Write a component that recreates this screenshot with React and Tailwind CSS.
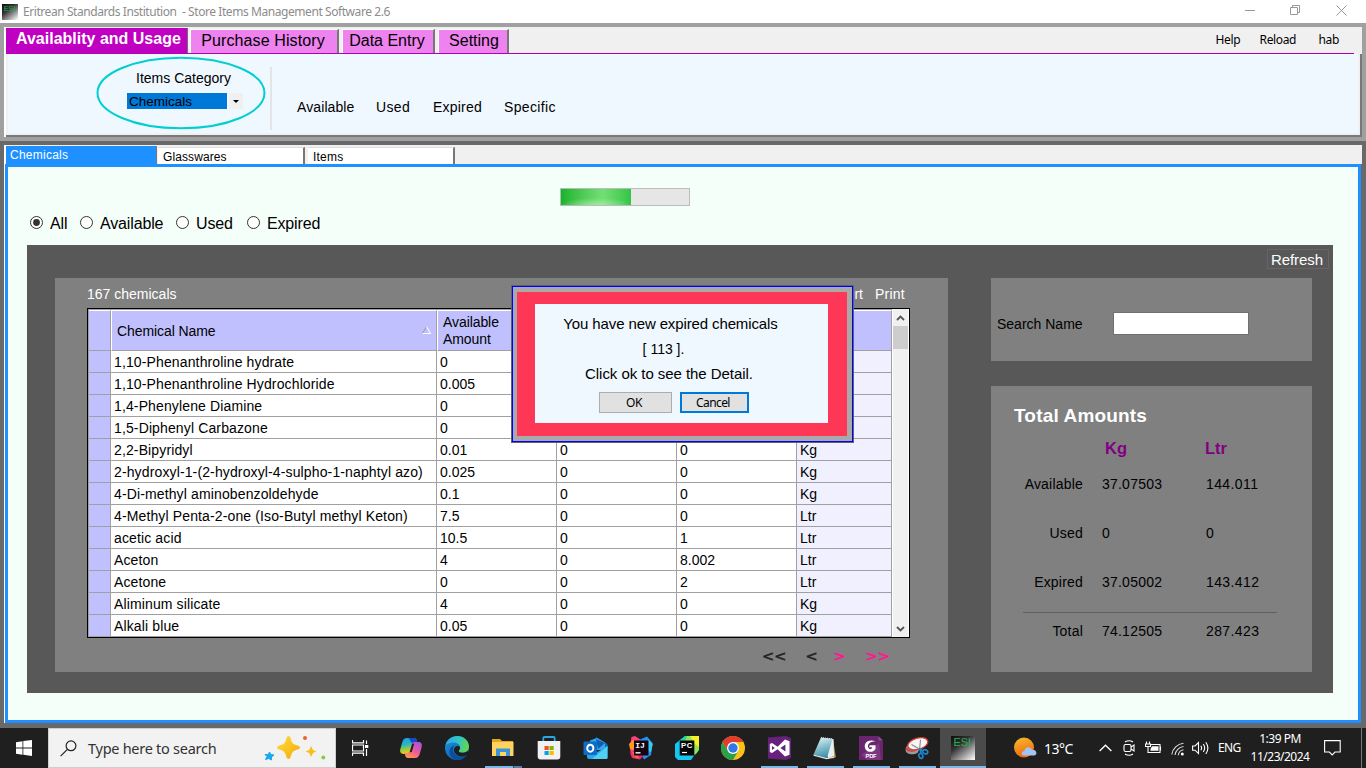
import React from "react";

const sans = "font-['Liberation_Sans',Arial,sans-serif]";
const ui = "font-['Noto_Sans','Open_Sans',sans-serif]";

function EsiIcon({ size, id }) {
  return (
    <svg width={size} height={size} viewBox="0 0 24 24" className="block shrink-0">
      <defs>
        <linearGradient id={id} x1="0.1" y1="0" x2="0.9" y2="1">
          <stop offset="0" stopColor="#111" />
          <stop offset="0.35" stopColor="#333" />
          <stop offset="1" stopColor="#f4f4f4" />
        </linearGradient>
      </defs>
      <rect width="24" height="24" fill={`url(#${id})`} />
      <text x="2.5" y="9.8" fontSize="11" textLength="17.5" fill="#22b04c" fontFamily="Liberation Sans, sans-serif">ESI</text>
    </svg>
  );
}

function TitleBar() {
  return (
    <div className={`flex h-[23px] items-center bg-white text-[#8c8c8c] ${ui}`}>
      <div className="ml-[2px]"><EsiIcon size={16} id="esiSmall" /></div>
      <span className="ml-[5px] text-[12px] leading-[22px] whitespace-pre tracking-[-0.43px]">
        Eritrean Standards Institution  - Store Items Management Software 2.6
      </span>
      <div className="mr-[19px] mb-[3px] ml-auto flex items-center gap-[35px]">
        <svg width="10" height="10"><path d="M0 5.5H10" stroke="#999" /></svg>
        <svg width="11" height="10" className="block" fill="none" stroke="#999">
          <path d="M0.5 2.5H7.5V9.5H0.5ZM2.5 2.5V0.5H9.5V7.5H7.5" />
        </svg>
        <svg width="11" height="11" className="block" stroke="#999"><path d="M0.5 0.5L10.5 10.5M10.5 0.5L0.5 10.5" /></svg>
      </div>
    </div>
  );
}

function RibbonTab({ label, className }) {
  return (
    <div className={`mt-[2px] mr-[2px] h-[24px] border-t border-r-2 border-l border-t-white border-r-[#777] border-l-white bg-[#ee82ee] text-center text-[16px] leading-[21px] text-black ${className}`}>
      {label}
    </div>
  );
}

function Ribbon() {
  return (
    <div className="h-[118px] bg-[#a0a0a0] p-[4px]">
      <div className="flex h-[110px] flex-col border-l-2 border-white bg-[#f0f0f0]">
        <div className="flex h-[26px] shrink-0">
          <div className="mt-px h-[26px] w-[182px] shrink-0 border-r border-[#707070] bg-[#c000c0] pl-[10px] text-[16px] leading-[22px] font-bold whitespace-nowrap text-white">
            Availablity and Usage
          </div>
          <RibbonTab label="Purchase History" className="ml-[2px] w-[149px] pr-[2px] tracking-[0.12px]" />
          <RibbonTab label="Data Entry" className="ml-[1px] w-[93px] pr-[2px]" />
          <RibbonTab label="Setting" className="ml-[1px] w-[71px] pl-[2px]" />
          <div className={`mr-[23px] ml-auto flex pt-[2px] text-[12px] leading-[22px] text-black ${ui} tracking-[-0.35px]`}>
            <span className="w-[44px]">Help</span>
            <span className="w-[59px]">Reload</span>
            <span>hab</span>
          </div>
        </div>
        <div className="mr-[8px] ml-px h-px shrink-0 bg-[#b000b0]" />
        <div className="flex h-[83px] border-r-2 border-b-2 border-[#787878] bg-[#f0f0f0] pr-[2px] pb-[2px] pl-[2px]">
          <div className="flex grow bg-[#f0f8ff]">
            <div className="relative ml-[88px] h-[75px] w-[172px]">
              <svg width="172" height="76" className="absolute inset-0" fill="none">
                <ellipse cx="85" cy="39" rx="83.5" ry="35.3" stroke="#00ced1" strokeWidth="2" />
              </svg>
              <div className="relative pt-[16px] pl-[3px] text-center text-[14px] leading-[16px]">Items Category</div>
              <div className="relative mt-[7px] ml-[31px] flex h-[16px]">
                <div className="w-[100px] bg-[#0078d7] pl-[2px] text-[13.5px] leading-[18px]">Chemicals</div>
                <div className="ml-[2px] flex w-[14px] items-center justify-center bg-[#f0f0f0]">
                  <svg width="6" height="3"><path d="M0 0H6L3 3Z" fill="#000" /></svg>
                </div>
              </div>
            </div>
            <div className="mt-[13px] ml-[2px] h-[63px] w-[2px] bg-[#e2e4e8]" />
            <div className="ml-[25px] flex pt-[44px] text-[14px] leading-[18px]">
              <span className="w-[79px] tracking-[0.1px]">Available</span>
              <span className="w-[57px] tracking-[0.35px]">Used</span>
              <span className="w-[71px] tracking-[0.2px]">Expired</span>
              <span className="tracking-[0.35px]">Specific</span>
            </div>
          </div>
        </div>
      </div>
    </div>
  );
}

function Radio({ label, checked, className }) {
  return (
    <div className={`flex items-center ${className}`}>
      <svg width="14" height="14" className="block">
        <circle cx="6.5" cy="6.5" r="6" fill="#fff" stroke="#333" />
        {checked && <circle cx="6.5" cy="6.5" r="3.4" fill="#333" />}
      </svg>
      <span className="ml-[6px] pt-[2px] text-[16px] leading-[18px] tracking-[-0.15px]">{label}</span>
    </div>
  );
}

const rows = [
  ["1,10-Phenanthroline hydrate", "0", "0", "0", "Kg"],
  ["1,10-Phenanthroline Hydrochloride", "0.005", "0", "0", "Kg"],
  ["1,4-Phenylene Diamine", "0", "0", "0", "Kg"],
  ["1,5-Diphenyl Carbazone", "0", "0", "0", "Kg"],
  ["2,2-Bipyridyl", "0.01", "0", "0", "Kg"],
  ["2-hydroxyl-1-(2-hydroxyl-4-sulpho-1-naphtyl azo)", "0.025", "0", "0", "Kg"],
  ["4-Di-methyl aminobenzoldehyde", "0.1", "0", "0", "Kg"],
  ["4-Methyl Penta-2-one (Iso-Butyl methyl Keton)", "7.5", "0", "0", "Ltr"],
  ["acetic acid", "10.5", "0", "1", "Ltr"],
  ["Aceton", "4", "0", "8.002", "Ltr"],
  ["Acetone", "0", "0", "2", "Ltr"],
  ["Aliminum silicate", "4", "0", "0", "Kg"],
  ["Alkali blue", "0.05", "0", "0", "Kg"],
];

const cols = "grid grid-cols-[22px_326px_120px_120px_120px_95px]";
const cell = "border-r border-b border-[#a0a0a0]";
const headCell = "border-r border-b border-t border-l border-r-[#a0a0a0] border-b-[#a0a0a0] border-t-white border-l-white bg-[#c0c0ff]";

function ChemicalTable() {
  return (
    <div className="flex h-[330px] w-[823px] border border-black bg-white">
      <div className="w-[804px] border-t border-l border-[#a0a0a0]">
        <div className={`${cols} text-[14px] leading-[17px] tracking-[-0.08px]`}>
          <div className="h-[41px] border-t border-r border-b border-t-white border-r-[#a0a0a0] border-b-[#a0a0a0] bg-[#c0c0ff]" />
          <div className={`${headCell} flex items-center justify-between pt-[2px] pr-[5px] pl-[5px]`}>
            Chemical Name
            <svg width="9" height="8" className="mb-[4px]"><path d="M4.5 0.5L0.5 7.5" stroke="#999" /><path d="M4.5 0.5L8.5 7.5H0.5" fill="none" stroke="#fff" /></svg>
          </div>
          <div className={`${headCell} pt-[3px] pr-[40px] pl-[5px]`}>Available Amount</div>
          <div className={headCell} />
          <div className={headCell} />
          <div className={headCell} />
        </div>
        {rows.map((r) => (
          <div key={r[0]} className={`${cols} h-[22px] grid-rows-[22px] text-[14px] leading-[22px] whitespace-nowrap`}>
            <div className={`${cell} bg-[#c0c0ff]`} />
            <div className={`${cell} h-[22px] pl-[3px] tracking-[0.13px]`}>{r[0]}</div>
            <div className={`${cell} h-[22px] pl-[3px]`}>{r[1]}</div>
            <div className={`${cell} h-[22px] pl-[3px]`}>{r[2]}</div>
            <div className={`${cell} h-[22px] pl-[3px]`}>{r[3]}</div>
            <div className={`${cell} h-[22px] bg-[#f0f0ff] pl-[3px]`}>{r[4]}</div>
          </div>
        ))}
      </div>
      <div className="ml-[1px] flex w-[15px] flex-col items-center bg-[#f0f0f0]">
        <svg width="9" height="6" className="mt-[6px] block"><path d="M1 5L4.5 1.5L8 5" fill="none" stroke="#555" strokeWidth="1.8" /></svg>
        <div className="mt-[5px] h-[23px] w-[15px] bg-[#cdcdcd]" />
        <svg width="9" height="6" className="mt-auto mb-[5px] block"><path d="M1 1L4.5 4.5L8 1" fill="none" stroke="#555" strokeWidth="1.8" /></svg>
      </div>
    </div>
  );
}

function Amounts({ label, kg, ltr, className }) {
  return (
    <div className={`grid grid-cols-[92px_104px_1fr] text-[14px] ${className}`}>
      <span className="text-right tracking-[0.2px]">{label}</span>
      <span className="pl-[19px] tracking-[0.22px]">{kg}</span>
      <span className="pl-[19px] tracking-[0.4px]">{ltr}</span>
    </div>
  );
}

function Dialog() {
  return (
    <div className="absolute top-[285px] left-[511px] h-[158px] w-[343px] border border-[#606070] text-black">
      <div className="h-full border border-[#0000ff] bg-[#a9a9a9] p-[4px] pt-[5px] pr-[5px] pb-[5px]">
        <div className="h-full bg-[#ff3757] pt-[12px] pr-[19px] pb-[13px] pl-[18px]">
          <div className="h-full bg-[#f0f8ff] pt-[7px]">
            <div className="w-[271px] text-center text-[15px] leading-[25px]">
              <div className="tracking-[-0.12px]">You have new expired chemicals</div>
              <div className="pt-px pr-[14px] text-[14px] leading-[24px]">[ 113 ].</div>
              <div className="pr-[3px] tracking-[-0.05px]">Click ok to see the Detail.</div>
            </div>
            <div className={`mt-[6px] ml-[64px] flex gap-[8px] text-[12px] ${ui}`}>
              <div className="h-[21px] w-[73px] border border-[#adadad] bg-[#e1e1e1] pr-[3px] text-center leading-[20px] tracking-[-0.5px]">OK</div>
              <div className="h-[21px] w-[69px] border-2 border-[#0078d7] bg-[#e1e1e1] pr-[3px] text-center leading-[18px] tracking-[-0.6px]">Cancel</div>
            </div>
          </div>
        </div>
      </div>
    </div>
  );
}

function ChemicalsPage() {
  return (
    <div className="flex h-[587px] flex-col bg-[#696969] pt-[4px] pr-[4px] pb-[5px] pl-[4px]">
      <div className="flex h-[19px] border-l-2 border-white bg-[#f0f0f0] text-[12px]">
        <div className="mt-px w-[151px] border-r border-[#777] bg-[#1e90ff] pl-[4px] leading-[18px] tracking-[0.25px] text-white">Chemicals</div>
        <div className="mt-[2px] ml-[1px] w-[147px] border-t border-r-2 border-t-[#ddd] border-r-[#777] bg-white pl-[5px] leading-[18px] tracking-[0.1px]">Glasswares</div>
        <div className="mt-[2px] ml-[3px] w-[147px] border-t border-r-2 border-t-[#ddd] border-r-[#777] bg-white pl-[5px] leading-[18px] tracking-[0.2px]">Items</div>
      </div>
      <div className="grow border-l border-white">
        <div className="mr-px h-full border-[3px] border-[#1e90ff] bg-[#f5fffa]">
          <div className="mt-[21px] ml-[552px] h-[18px] w-[130px] border border-[#bcbcbc] bg-[#e6e6e6]">
            <div className="h-[16px] w-[70px] bg-linear-to-r from-[#11b42c] via-[#72df75] via-60% to-[#2fc545]">
              <div className="h-full bg-radial-[50%_45%_at_50%_100%] from-[#a8f0a8]/80 to-transparent" />
            </div>
          </div>
          <div className="mt-[7px] ml-[22px] flex h-[20px] text-black">
            <Radio label="All" checked className="w-[50px]" />
            <Radio label="Available" className="w-[96px]" />
            <Radio label="Used" className="w-[71px]" />
            <Radio label="Expired" />
          </div>
          <div className="mt-[12px] ml-[19px] flex h-[448px] w-[1306px] bg-[#585858] pl-[28px]">
            <div className="mt-[33px] h-[394px] w-[893px] bg-[#808080] pl-[32px]">
              <div className="flex h-[30px] w-[818px] items-center pt-[3px] text-[14px] text-white">
                <span className="grow">167 chemicals</span>
                <span className="mr-[12px]">Export</span>
                <span className="tracking-[0.25px]">Print</span>
              </div>
              <ChemicalTable />
              <div className="ml-[675px] flex h-[36px] items-center font-['DejaVu_Sans',sans-serif] text-[14.5px] leading-[20px] text-[#222] [-webkit-text-stroke:0.5px]">
                <span className="w-[43.5px]">&lt;&lt;</span>
                <span className="w-[28px]">&lt;</span>
                <span className="w-[32px] text-[#ff1493]">&gt;</span>
                <span className="text-[#ff1493]">&gt;&gt;</span>
              </div>
            </div>
            <div className="ml-[43px] w-[342px]">
              <div className="flex h-[33px] justify-end pt-[4px]">
                <div className="mr-[4px] h-[20px] w-[62px] border border-[#656565] pr-[2px] text-center text-[15px] leading-[20px] tracking-[-0.05px] text-white">Refresh</div>
              </div>
              <div className="flex h-[83px] w-[321px] items-center bg-[#808080] pt-[8px] pl-[6px] text-[14px]">
                <span className="w-[116px] pt-[2px]">Search Name</span>
                <div className="h-[23px] w-[136px] border border-[#707070] bg-white" />
              </div>
              <div className="mt-[25px] h-[286px] w-[321px] bg-[#808080] pt-[17px]">
                <div className="pl-[23px] text-[19px] leading-[25px] font-bold tracking-[0.17px] text-white">Total Amounts</div>
                <div className="mt-[9px] grid h-[23px] grid-cols-[100px_1fr] pl-[114px] text-[16.5px] leading-[23px] font-bold text-[#800080]">
                  <span>Kg</span>
                  <span>Ltr</span>
                </div>
                <Amounts label="Available" kg="37.07503" ltr="144.011" className="leading-[49px]" />
                <Amounts label="Used" kg="0" ltr="0" className="leading-[49px]" />
                <Amounts label="Expired" kg="37.05002" ltr="143.412" className="h-[54px] leading-[49px]" />
                <div className="ml-[32px] h-px w-[254px] bg-[#606060]" />
                <Amounts label="Total" kg="74.12505" ltr="287.423" className="leading-[36px]" />
              </div>
            </div>
          </div>
        </div>
      </div>
    </div>
  );
}

function Slot({ children, bar }) {
  return (
    <div className={`relative flex h-[40px] w-[46px] shrink-0 items-center justify-center ${bar === "active" ? "bg-[#4b4b4b]" : ""}`}>
      {children}
      {bar === "on" && <div className="absolute bottom-0 left-[5px] h-[2px] w-[37px] bg-[#76b9ed]" />}
      {bar === "multi" && (
        <div className="absolute bottom-0 left-[5px] flex h-[2px] w-[37px] bg-[#76b9ed]">
          <div className="ml-auto w-[9px] border-l border-[#33506a] bg-[#557fa4]" />
        </div>
      )}
      {bar === "active" && <div className="absolute bottom-0 left-0 h-[2px] w-[46px] bg-[#76b9ed]" />}
    </div>
  );
}

const Copilot = () => (
  <svg width="24" height="24" viewBox="0 0 24 24">
    <defs>
      <linearGradient id="cpA" x1="0" y1="0" x2="0.2" y2="1">
        <stop offset="0" stopColor="#1b9de8" /><stop offset="0.45" stopColor="#2cb5c0" /><stop offset="0.75" stopColor="#9bcf3c" /><stop offset="1" stopColor="#f6c614" />
      </linearGradient>
      <linearGradient id="cpB" x1="0.8" y1="0" x2="0.2" y2="1">
        <stop offset="0" stopColor="#a452e8" /><stop offset="0.5" stopColor="#ee5a96" /><stop offset="1" stopColor="#ff9a4c" />
      </linearGradient>
    </defs>
    <path d="M11 2H15.2C17 2 17.4 3.4 17.9 5L18.5 7H16C14 7 13.2 8 12.7 10L11.2 15.5C10.6 17.5 9.8 18 8 18H4.5C1.6 18 .6 15.8 1.4 12.8L3 7C4 3.6 5 2 8 2Z" fill="url(#cpA)" />
    <path d="M11 2H15.2C17 2 17.4 3.4 17.9 5L18.5 7H14C12.3 7 11.6 5.8 11 4C10.6 2.8 10 2 8.5 2Z" fill="#1748c8" />
    <path d="M13 22H8.8C7 22 6.6 20.6 6.1 19L5.5 17H8C10 17 10.8 16 11.3 14L12.8 8.5C13.4 6.5 14.2 6 16 6H19.5C22.4 6 23.4 8.2 22.6 11.2L21 17C20 20.4 19 22 16 22Z" fill="url(#cpB)" />
    <path d="M10.6 16.2L13.2 7.8L15.2 7.4L12.8 16Z" fill="#1f1f1f" />
  </svg>
);

const Edge = () => (
  <svg width="24" height="24" viewBox="0 0 24 24">
    <defs>
      <linearGradient id="edA" x1="0" y1="0.2" x2="1" y2="0.5"><stop offset="0" stopColor="#2aa9e8" /><stop offset="0.5" stopColor="#31c4c6" /><stop offset="1" stopColor="#63d64c" /></linearGradient>
      <linearGradient id="edB" x1="0" y1="0" x2="0.5" y2="1"><stop offset="0" stopColor="#1f96d8" /><stop offset="1" stopColor="#0d62b8" /></linearGradient>
    </defs>
    <circle cx="12" cy="12" r="12" fill="url(#edB)" />
    <path d="M0.5 9.5C2 3.5 7 0 12.3 0C19 0 24 5 24 10.4C24 14 21.2 16.6 17.6 16.6C15.2 16.6 13.7 15.7 13.7 15C13.7 14.3 15.2 13.8 15.2 11.6C15.2 8.6 12 6.6 8.4 6.6C5 6.6 2 8 0.5 9.5Z" fill="url(#edA)" />
    <path d="M9.6 9.5C7.6 11 7.6 15.5 10 18.3C12.5 21.2 17 22 21.5 19.3C19.3 22.3 15.8 24 12 24C6 22.5 3.8 18.5 4.5 14.5C5 11.5 7.2 9.8 9.6 9.5Z" fill="#0b4f9c" />
    <path d="M13.7 15C13.7 16.6 18 17.8 22 15.6C23.4 14.8 24.6 16 23.4 17.4C22.8 18.4 22.2 18.9 21.5 19.2C17.5 21.5 12 20.6 9.6 16.5C8.4 14 9 11.2 11.5 10.3C15 9.2 15.2 11.8 14.9 12.8C14.7 13.8 13.7 14.2 13.7 15Z" fill="#1f1f1f" />
  </svg>
);

const Explorer = () => (
  <svg width="22" height="20" viewBox="0 0 22 20">
    <path d="M0 1H8L10 3H21V18H0Z" fill="#e5a61a" />
    <path d="M0 4H21.5V18H0Z" fill="#ffd35e" />
    <path d="M4 18V10.5H18V18H14V14H8V18Z" fill="#3b93d9" />
  </svg>
);

const Store = () => (
  <svg width="24" height="24" viewBox="0 0 24 24">
    <path d="M6.3 6V2.2C6.3 1.5 6.8 1 7.5 1H16.5C17.2 1 17.7 1.5 17.7 2.2V6" fill="none" stroke="#2aa7e4" strokeWidth="1.8" />
    <path d="M0.7 5H23.3V20.5Q23.3 23.5 20.3 23.5H3.7Q0.7 23.5 0.7 20.5Z" fill="#f1f1f1" />
    <path d="M7.5 10H11.7V14H7.5Z" fill="#f25022" /><path d="M12.5 10H16.7V14H12.5Z" fill="#7fba00" />
    <path d="M7.5 15H11.7V19H7.5Z" fill="#00a4ef" /><path d="M12.5 15H16.7V19H12.5Z" fill="#ffb900" />
  </svg>
);

const Outlook = () => (
  <svg width="25" height="24" viewBox="0 0 25 24">
    <path d="M4.5 8L13.5 1.3L24.5 8V12H4.5Z" fill="#1066b8" />
    <path d="M7 4.5L14 2L22 6.5V14H7Z" fill="#33a7e8" />
    <path d="M13 3L22 7L15 13Z" fill="#0f5fb0" />
    <path d="M4 12L14.5 16L24.5 10V21.5Q24.5 23 23 23H6Q4 23 4 21Z" fill="#28a8ea" />
    <path d="M24.5 10L9 23H23Q24.5 23 24.5 21.5Z" fill="#50d0f5" />
    <rect x="0.5" y="5.5" width="13.5" height="13.5" rx="1" fill="#0f6cc4" />
    <ellipse cx="7.3" cy="12.2" rx="3.1" ry="3.5" fill="none" stroke="#fff" strokeWidth="1.9" />
  </svg>
);

const Idea = () => (
  <svg width="24" height="24" viewBox="0 0 24 24">
    <path d="M1 10L2.5 1L6 0L12 4L7 16L1.5 17Z" fill="#ff3f7c" />
    <path d="M0 8L4 4L8 8L4 14L1 13Z" fill="#ff9a1e" />
    <path d="M10 4L18 0.5L23.5 7L22 19L15 23.5L12 18Z" fill="#2a8ff2" />
    <path d="M19 3L23.8 8L22 16L19 15Z" fill="#38c8f0" />
    <path d="M1 17L8 13L15 19L11 23.5L3 22Z" fill="#f0267a" />
    <path d="M3 16L8 17L10 23L5 21Z" fill="#fc6b3a" />
    <rect x="5" y="4.5" width="14.5" height="15" fill="#120510" />
    <text x="6.2" y="12" fontSize="8" fontWeight="700" fill="#fff" fontFamily="Liberation Mono, monospace">IJ</text>
    <path d="M6.5 16.8H11.5" stroke="#ddd" strokeWidth="1.6" />
  </svg>
);

const PyCharm = () => (
  <svg width="24" height="24" viewBox="0 0 24 24">
    <path d="M0 8L10 0H23V14L16 24H3L0 21Z" fill="#14c8f0" />
    <path d="M4 5L10 0H14V6H4Z" fill="#22d39c" />
    <path d="M12 0H24V14L21 18L18.5 19V5H10Z" fill="#8fe25c" />
    <path d="M15 0H24V11L20 8Z" fill="#f6ef2a" />
    <rect x="4.7" y="4.5" width="14.6" height="15" fill="#050505" />
    <text x="6" y="12" fontSize="7.8" textLength="11.5" fontWeight="700" fill="#fff" fontFamily="Liberation Sans, sans-serif">PC</text>
    <path d="M7 16.5H12" stroke="#fff" strokeWidth="1.2" />
  </svg>
);

const Chrome = () => (
  <svg width="24" height="24" viewBox="0 0 24 24">
    <circle cx="12" cy="12" r="12" fill="#fbc116" />
    <path d="M1.6 6A12 12 0 0 1 22.4 6L12 6L7 15Z" fill="#e33b2e" />
    <path d="M1.6 6A12 12 0 0 0 12 24L17.2 15L7 15Z" fill="#2aa04a" />
    <circle cx="12" cy="12" r="6" fill="#fff" />
    <circle cx="12" cy="12" r="4.7" fill="#3177e8" />
  </svg>
);

const VisualStudio = () => (
  <svg width="23" height="24" viewBox="0 0 23 24">
    <path d="M0 1.5L18 0L23 2V22L18 24L0 22.5Z" fill="#68217a" />
    <path d="M1.8 8V16L4 17L9.6 13.2L17 20.6L21.5 18.7V5.3L17 3.4L9.6 10.8L4 7ZM4 10L6.8 12L4 14ZM17.4 8.4V15.6L12.4 12Z" fill="#fff" fillRule="evenodd" />
  </svg>
);

const Notepad = () => (
  <svg width="24" height="24" viewBox="0 0 24 24">
    <defs><linearGradient id="npA" x1="0.2" y1="0" x2="0.5" y2="1"><stop offset="0" stopColor="#e2f3f6" /><stop offset="0.5" stopColor="#86c0cf" /><stop offset="1" stopColor="#3d8fa6" /></linearGradient></defs>
    <path d="M20 3L22.8 21L20 22.5Z" fill="#c39b58" />
    <path d="M9 2L20.5 3L21 20L15 22.5Z" fill="#e8eff1" />
    <path d="M8 1.5L19.5 3L14 22L0.5 18.5Z" fill="url(#npA)" />
    <path d="M0.5 18.5L14 22L21 20.5L20.5 22L13.5 23.3L0.5 19.8Z" fill="#dfe7e8" />
    <path d="M8 1.8L19.5 3.2" stroke="#ddd" strokeDasharray="1 1" strokeWidth="1.6" />
  </svg>
);

const Foxit = () => (
  <svg width="24" height="24" viewBox="0 0 24 24">
    <path d="M0 0H18.5L24 5.5V24H0Z" fill="#6b2470" />
    <path d="M19.5 0L24 4.5H19.5Z" fill="#8b4a90" />
    <path d="M2 19L20 7L22 24H8Z" fill="#824087" opacity="0.7" />
    <path d="M16.5 5.2C10 2.8 5.3 6 5.8 11C6.3 16.2 13.5 17.8 16.5 13V9.3H10.8L10 11.2H13.2C12.8 14 9.5 13.8 9 10.8C8.6 7.6 11.5 5.6 16.5 5.2Z" fill="#fff" />
    <text x="6.6" y="22.4" fontSize="5.8" fontWeight="700" textLength="11" fill="#fff" fontFamily="Liberation Sans, sans-serif">PDF</text>
  </svg>
);

const Snip = () => (
  <svg width="24" height="24" viewBox="0 0 24 24">
    <path d="M0.5 14C0.5 11 2.5 9 5 6.5L15 12L12.5 17C8 19.5 1 18.5 0.5 14Z" fill="#9b9b9b" />
    <ellipse cx="12.8" cy="7.8" rx="10.3" ry="5.6" transform="rotate(-16 12.8 7.8)" fill="#f6f6f6" stroke="#d43a35" strokeWidth="1.3" />
    <path d="M1.3 12C2 15 7 16.2 11 14" fill="none" stroke="#d43a35" strokeWidth="1.3" />
    <path d="M6.5 8.5L16 14M15.5 3.8L14.5 14" stroke="#888" strokeWidth="1.1" />
    <g fill="none" stroke="#1c86d1" strokeWidth="1.7"><ellipse cx="20.2" cy="15.8" rx="2.6" ry="2" transform="rotate(20 20.2 15.8)" /><ellipse cx="15.8" cy="19.9" rx="1.9" ry="2.6" transform="rotate(-20 15.8 19.9)" /><path d="M14 12.5L18 15M15 13L16 17.5" /></g>
  </svg>
);

function Taskbar() {
  return (
    <div className={`flex h-[40px] items-center bg-[#1f1f1f] text-white ${ui}`}>
      <div className="flex w-[48px] justify-center">
        <svg width="16" height="16" viewBox="0 0 16 16" fill="#fff"><path d="M0 2.3L6.5 1.3V7.5H0ZM7.3 1.1L16 0V7.5H7.3ZM0 8.4H6.5V14.7L0 13.8ZM7.3 8.4H16V16L7.3 14.8Z" /></svg>
      </div>
      <div className="flex h-[40px] w-[288px] items-center border border-[#cfcfcf] bg-[#f2f2f2]">
        <svg width="17" height="17" viewBox="0 0 17 17" className="ml-[11px]" fill="none" stroke="#222" strokeWidth="1.2"><circle cx="11" cy="5.8" r="4.9" /><path d="M7.4 9.4L0.6 16.2" /></svg>
        <span className="ml-[11px] pt-px text-[14.5px] tracking-[-0.27px] whitespace-nowrap text-[#333]">Type here to search</span>
        <svg width="64" height="28" viewBox="0 0 64 28" className="mr-[9px] ml-auto">
          <defs><linearGradient id="spA" x1="0" y1="0" x2="1" y2="1"><stop offset="0" stopColor="#ffdd3b" /><stop offset="1" stopColor="#f5a90c" /></linearGradient></defs>
          <path d="M26.5 2Q28.5 2 29.5 7.5Q30.5 10 34 11Q38 12 38 13.5Q38 15 34 16Q30.5 17 29.5 20Q28.5 25 26.5 25Q24.5 25 23.5 20Q22.5 17 19 16Q15 15 15 13.5Q15 12 19 11Q22.5 10 23.5 7.5Q24.5 2 26.5 2Z" fill="url(#spA)" />
          <path d="M49 12L51 16L54.5 17.5L51 19L49 23L47.2 19L43.5 17.5L47.2 16Z" fill="#f9bf1c" />
          <path d="M7.5 18L8.8 20.6L12 21L9.5 23L9.5 26L6.8 24.5L3.5 25.5L5 22.5L3 20.5L6.3 20.6Z" fill="#18a8f0" stroke="#18a8f0" />
          <circle cx="43" cy="4" r="2" fill="#ee6230" /><circle cx="61.3" cy="23.5" r="2" fill="#8cc84b" />
        </svg>
      </div>
      <div className="flex w-[52px] shrink-0 pl-[16px]">
        <svg width="17" height="16" viewBox="0 0 17 16" fill="none" stroke="#fff" strokeWidth="1.2"><path d="M0.5 0V2.8H11.5V0M0.5 16V13.2H11.5V16M0.5 5H11.5V11H0.5ZM14.5 0.5V4M14.5 9V16" /><path d="M13 5H16.3V8H13Z" fill="#fff" stroke="none" /></svg>
      </div>
      <Slot><Copilot /></Slot>
      <Slot><Edge /></Slot>
      <Slot bar="multi"><Explorer /></Slot>
      <Slot><Store /></Slot>
      <Slot><Outlook /></Slot>
      <Slot><Idea /></Slot>
      <Slot><PyCharm /></Slot>
      <Slot><Chrome /></Slot>
      <Slot bar="on"><VisualStudio /></Slot>
      <Slot bar="on"><Notepad /></Slot>
      <Slot bar="on"><Foxit /></Slot>
      <Slot bar="on"><Snip /></Slot>
      <Slot bar="active"><EsiIcon size={24} id="esiBig" /></Slot>
      <svg width="23" height="22" viewBox="0 0 23 22" className="ml-[28px] shrink-0">
        <defs><linearGradient id="sun" x1="0" y1="0" x2="0.3" y2="1"><stop offset="0" stopColor="#f7bd2b" /><stop offset="1" stopColor="#f06a12" /></linearGradient></defs>
        <circle cx="10" cy="10.5" r="10" fill="url(#sun)" />
        <path d="M10 18.5C7 18.5 7 14.2 10.3 14C10.8 9.5 16.5 8.8 18 12.8C23.5 12.5 23.5 18.5 20 18.5Z" fill="#a3c3f3" />
      </svg>
      <span className="ml-[7px] w-[55px] text-[14px] tracking-[-0.5px]">13°C</span>
      <svg width="13" height="8" viewBox="0 0 13 8" className="shrink-0" fill="none" stroke="#fff" strokeWidth="1.3"><path d="M0.6 7L6.5 1.2L12.4 7" /></svg>
      <svg width="12" height="16" viewBox="0 0 12 16" className="ml-[11px] shrink-0" fill="none" stroke="#fff" strokeWidth="1.1"><rect x="1" y="4.5" width="7" height="7" rx="1.5" /><path d="M8 7L11 5V11L8 9M2 2Q6 -0.6 10 2M2 14Q6 16.6 10 14" /></svg>
      <svg width="17" height="14" viewBox="0 0 17 14" className="ml-[10px] shrink-0" fill="none" stroke="#fff" strokeWidth="1.1"><path d="M5.5 3.5H15V11.5H4.5M15.5 5.5V9.5M1.5 0.5V3M4.5 0.5V3M0.5 3H5.5V5.5H0.5ZM3 6V11.5H4.5" /><path d="M7 5.3H13.5V9.8H5.5V8Z" fill="#fff" stroke="none" /></svg>
      <svg width="14" height="14" viewBox="0 0 14 14" className="mt-[2px] ml-[9px] shrink-0" fill="none" stroke="#ddd" strokeWidth="1.1"><path d="M0.8 12.5C1.5 6.5 6.5 1.8 12.5 1.2M4 13C4.5 8.6 8 5 12.5 4.5M7.3 13.2C7.6 10.5 9.6 8.2 12.5 7.7" /><circle cx="11.3" cy="12" r="1.5" fill="#fff" stroke="none" /></svg>
      <svg width="18" height="14" viewBox="0 0 18 14" className="ml-[7px] shrink-0" fill="none" stroke="#fff" strokeWidth="1.1"><path d="M0.6 5V9.2H3L6.5 12.5V1.6L3 5ZM8.8 4.8Q10.4 7 8.8 9.3M11.3 3Q14 7 11.3 11M13.8 1.2Q18 7 13.8 13" /></svg>
      <span className="ml-[8px] w-[29px] text-[12px] tracking-[-0.6px]">ENG</span>
      <div className="w-[66px] text-center text-[12px] leading-[18px] tracking-[-0.5px] whitespace-nowrap">
        <div>1:39 PM</div>
        <div>11/23/2024</div>
      </div>
      <svg width="17" height="16" viewBox="0 0 17 16" className="ml-[11px] shrink-0" fill="none" stroke="#fff" strokeWidth="1.1"><path d="M0.6 0.6H16.2V12H11L8.2 15L5.4 12H0.6Z" /></svg>
      <div className="ml-auto h-[40px] w-[5px] border-l border-[#777]" />
    </div>
  );
}

export default function App() {
  return (
    <div className={`relative flex h-[768px] w-[1366px] flex-col overflow-hidden text-black ${sans}`}>
      <TitleBar />
      <Ribbon />
      <ChemicalsPage />
      <Taskbar />
      <Dialog />
    </div>
  );
}
